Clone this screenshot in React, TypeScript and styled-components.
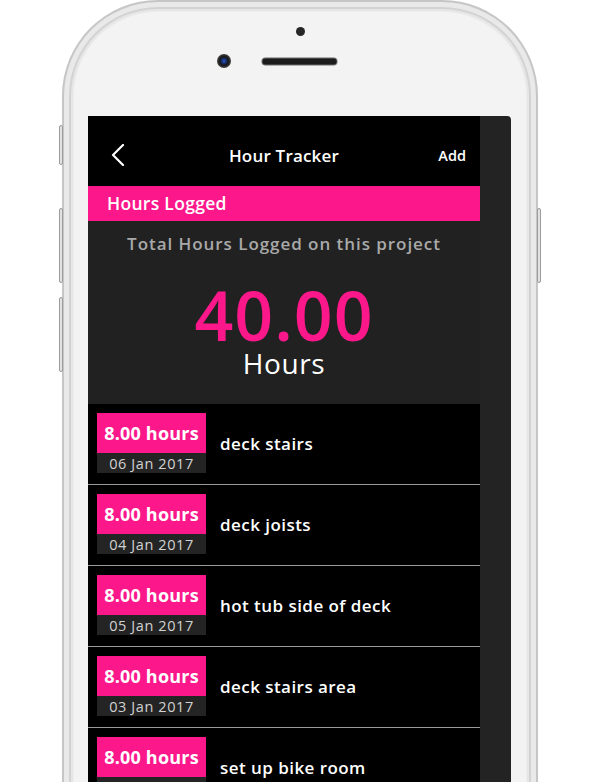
import styled, { createGlobalStyle } from 'styled-components';

const GlobalStyle = createGlobalStyle`
  html, body {
    margin: 0;
    padding: 0;
    background: #ffffff;
  }
  body {
    font-family: 'Open Sans', 'Liberation Sans', sans-serif;
  }
`;

const PINK = '#fc178b';

interface entryType {
  hours: string;
  date: string;
  title: string;
}

const entries: entryType[] = [
  { hours: '8.00 hours', date: '06 Jan 2017', title: 'deck stairs' },
  { hours: '8.00 hours', date: '04 Jan 2017', title: 'deck joists' },
  { hours: '8.00 hours', date: '05 Jan 2017', title: 'hot tub side of deck' },
  { hours: '8.00 hours', date: '03 Jan 2017', title: 'deck stairs area' },
  { hours: '8.00 hours', date: '02 Jan 2017', title: 'set up bike room' },
];

const Chevron = () => (
  <svg width="14" height="22" viewBox="0 0 14 22">
    <polyline
      points="12,1 2,11 12,21"
      fill="none"
      stroke="#ffffff"
      strokeWidth="2.2"
      strokeLinecap="round"
      strokeLinejoin="round"
    />
  </svg>
);

const Lens = () => (
  <svg width="16" height="16" viewBox="0 0 16 16">
    <defs>
      <radialGradient id="lens" cx="50%" cy="50%" r="50%">
        <stop offset="0%" stopColor="#2a55c0" />
        <stop offset="35%" stopColor="#16306e" />
        <stop offset="60%" stopColor="#151515" />
        <stop offset="100%" stopColor="#444444" />
      </radialGradient>
    </defs>
    <circle cx="8" cy="8" r="7" fill="url(#lens)" />
  </svg>
);

const Grille = () => (
  <svg width="77" height="9" viewBox="0 0 77 9">
    <rect x="0.5" y="0.5" width="76" height="8" rx="4" fill="#6a6a6a" />
    <rect x="1.5" y="1.5" width="74" height="6" rx="3" fill="#1c1c1c" />
  </svg>
);

export default function App() {
  return (
    <Page>
      <GlobalStyle />
      <Phone>
        <SideButton $side="left" $top={123} $height={38} />
        <SideButton $side="left" $top={206} $height={73} />
        <SideButton $side="left" $top={295} $height={73} />
        <SideButton $side="right" $top={206} $height={73} />
        <Bezel>
          <Sensor />
          <EarRow>
            <Lens />
            <Grille />
            <EarSpacer />
          </EarRow>
        </Bezel>
        <Screen>
          <AppColumn>
            <Header>
              <BackButton>
                <Chevron />
              </BackButton>
              <Title>Hour Tracker</Title>
              <AddButton>Add</AddButton>
            </Header>
            <SectionBar>Hours Logged</SectionBar>
            <Summary>
              <SummaryLabel>Total Hours Logged on this project</SummaryLabel>
              <TotalValue>40.00</TotalValue>
              <TotalUnit>Hours</TotalUnit>
            </Summary>
            <List>
              {entries.map((entry, i) => (
                <Row key={i}>
                  <Badge>
                    <BadgeHours>{entry.hours}</BadgeHours>
                    <BadgeDate>{entry.date}</BadgeDate>
                  </Badge>
                  <RowTitle>{entry.title}</RowTitle>
                </Row>
              ))}
            </List>
          </AppColumn>
        </Screen>
      </Phone>
    </Page>
  );
}

const Page = styled.div`
  width: 613px;
  height: 782px;
  overflow: hidden;
  background: #ffffff;
  padding-left: 62px;
  box-sizing: border-box;
`;

const Phone = styled.div`
  position: relative;
  width: 476px;
  height: 900px;
  box-sizing: border-box;
  border: 2px solid #c6c6c6;
  border-bottom: none;
  border-radius: 96px 96px 0 0;
  background: #f3f3f3;
  box-shadow: inset 0 0 0 5px #e9e9e9, inset 0 0 0 7px #d3d3d3,
    inset 0 0 0 9px #e6e6e6, inset 0 0 0 10px #ededed;
  padding: 0 25px 0 24px;
  display: flex;
  flex-direction: column;
`;

const SideButton = styled.div<{ $side: 'left' | 'right'; $top: number; $height: number }>`
  position: absolute;
  top: ${({ $top }) => $top}px;
  ${({ $side }) => ($side === 'left' ? 'left: -5px;' : 'right: -5px;')}
  width: 2px;
  height: ${({ $height }) => $height}px;
  background: #e2e2e2;
  border: 1px solid #9c9c9c;
  border-radius: 2px;
`;

const Bezel = styled.div`
  height: 114px;
  flex-shrink: 0;
  display: flex;
  flex-direction: column;
  align-items: center;
`;

const Sensor = styled.div`
  width: 9px;
  height: 9px;
  margin-top: 25px;
  margin-left: 2px;
  border-radius: 50%;
  background: #262626;
`;

const EarRow = styled.div`
  margin-top: 17px;
  display: flex;
  align-items: center;
  gap: 29px;
  line-height: 0;

  svg {
    display: block;
    flex-shrink: 0;
  }
`;

const EarSpacer = styled.div`
  width: 16px;
  height: 16px;
`;

const Screen = styled.div`
  flex: 1;
  display: flex;
  background: #232323;
  border-radius: 0 4px 0 0;
  overflow: hidden;
`;

const AppColumn = styled.div`
  width: 392px;
  background: #000000;
  display: flex;
  flex-direction: column;
`;

const Header = styled.div`
  height: 70px;
  box-sizing: border-box;
  padding-top: 8px;
  display: grid;
  grid-template-columns: 1fr auto 1fr;
  align-items: center;
  color: #ffffff;
`;

const BackButton = styled.div`
  padding-left: 23px;
  display: flex;
  align-items: center;
`;

const Title = styled.div`
  font-size: 17px;
  font-weight: 600;
  letter-spacing: 0.2px;
`;

const AddButton = styled.div`
  justify-self: end;
  padding-right: 14px;
  font-size: 14.5px;
  font-weight: 600;
`;

const SectionBar = styled.div`
  height: 35px;
  box-sizing: border-box;
  padding-left: 19px;
  padding-bottom: 2px;
  background: ${PINK};
  color: #ffffff;
  font-size: 17.5px;
  font-weight: 600;
  letter-spacing: 0.3px;
  display: flex;
  align-items: center;
`;

const Summary = styled.div`
  height: 183px;
  background: #212121;
  display: flex;
  flex-direction: column;
  align-items: center;
`;

const SummaryLabel = styled.div`
  margin-top: 11px;
  font-size: 17px;
  line-height: 24px;
  font-weight: 600;
  color: #a9a9a9;
  letter-spacing: 0.95px;
`;

const TotalValue = styled.div`
  margin-top: 25px;
  font-size: 68px;
  line-height: 68px;
  font-weight: 600;
  color: ${PINK};
  letter-spacing: 1px;
`;

const TotalUnit = styled.div`
  font-size: 28px;
  line-height: 28px;
  font-weight: 400;
  color: #ffffff;
  letter-spacing: 0.6px;
`;

const List = styled.div`
  display: flex;
  flex-direction: column;
`;

const Row = styled.div`
  display: flex;
  align-items: center;
  gap: 14px;
  padding: 9px 9px 11px;
  border-bottom: 1px solid #9a9a9a;
`;

const Badge = styled.div`
  width: 109px;
  display: flex;
  flex-direction: column;
`;

const BadgeHours = styled.div`
  height: 40px;
  background: ${PINK};
  color: #ffffff;
  font-size: 18px;
  font-weight: 700;
  letter-spacing: 0.2px;
  display: flex;
  align-items: center;
  justify-content: center;
`;

const BadgeDate = styled.div`
  height: 20px;
  background: #242424;
  color: #d2d2d2;
  font-size: 14.5px;
  font-weight: 400;
  letter-spacing: 0.6px;
  display: flex;
  align-items: center;
  justify-content: center;
`;

const RowTitle = styled.div`
  font-size: 17px;
  font-weight: 600;
  color: #ffffff;
  letter-spacing: 0.45px;
`;
